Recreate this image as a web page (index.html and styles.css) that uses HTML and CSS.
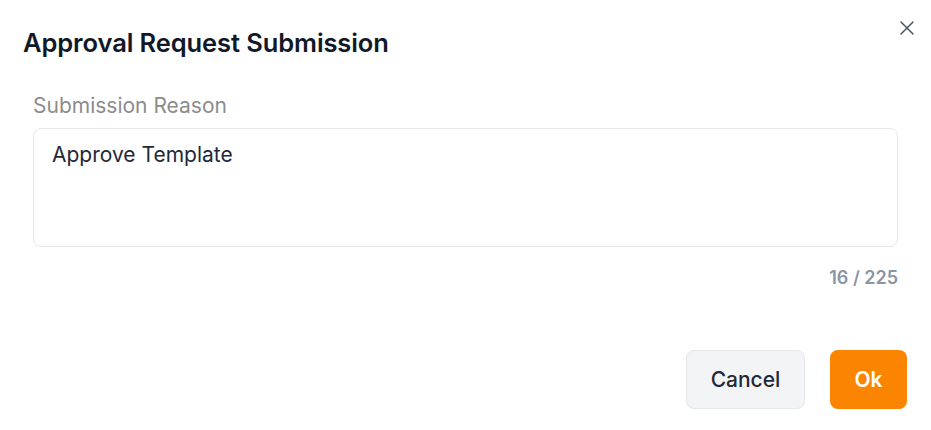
FILE: index.html
```html
<!DOCTYPE html>
<html>
<head>
<meta charset="utf-8">
<link rel="stylesheet" href="styles.css">
</head>
<body>
<div class="dialog">
  <div class="header">
    <h1 class="title">Approval Request Submission</h1>
    <button class="close" aria-label="Close">
      <svg width="16" height="16" viewBox="0 0 16 16"><path d="M2 2L14 14M14 2L2 14" stroke="#4b5563" stroke-width="1.5" stroke-linecap="round"/></svg>
    </button>
  </div>
  <div class="body">
    <label class="label">Submission Reason</label>
    <div class="textarea">Approve Template</div>
    <div class="counter">16 / 225</div>
  </div>
  <div class="footer">
    <button class="btn btn-cancel">Cancel</button>
    <button class="btn btn-ok">Ok</button>
  </div>
</div>
</body>
</html>
```
FILE: styles.css
```css
* { box-sizing: border-box; }
body { margin: 0; background: #fff; font-family: Inter, "Noto Sans", sans-serif; }
.dialog { width: 931px; height: 430px; padding: 0 23px 0 23px; display: flex; flex-direction: column; }
.header { display: flex; justify-content: space-between; align-items: flex-start; padding-top: 28px; }
.title { margin: 0; font-size: 25.5px; font-weight: 600; color: #111827; line-height: 30px; letter-spacing: -0.1px; }
.close { border: 0; background: none; padding: 0; margin: -8px -7px 0 0; width: 16px; height: 16px; display: flex; }
.body { padding: 0 10px; margin-top: 35px; display: flex; flex-direction: column; }
.label { font-size: 21px; color: #8c8c8c; line-height: 26px; }
.textarea { margin-top: 9px; height: 119px; border: 1px solid #e5e7eb; border-radius: 8px; padding: 13px 18px; font-size: 21px; color: #1f2937; line-height: 26px; }
.counter { margin-top: 20px; text-align: right; font-size: 18px; font-weight: 600; color: #8b95a5; line-height: 22px; }
.footer { display: flex; justify-content: flex-end; gap: 25px; margin-top: 61px; padding-right: 1px; }
.btn { height: 59px; border-radius: 8px; font-family: inherit; font-size: 21px; }
.btn-cancel { width: 119px; background: #f3f4f6; border: 1px solid #e5e7eb; color: #1f2937; font-weight: 500; }
.btn-ok { width: 77px; background: #fb8500; border: 0; color: #fff; font-weight: 600; }
```
